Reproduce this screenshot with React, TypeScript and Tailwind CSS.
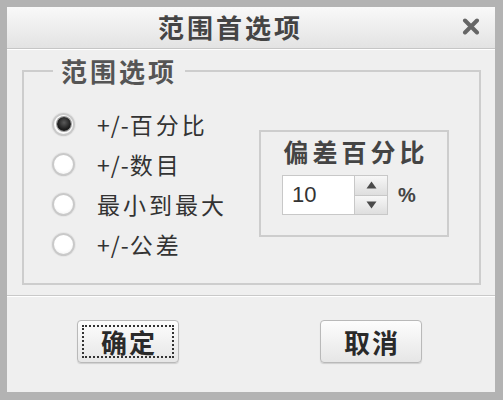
import React from "react";

function Radio({ checked }: { checked?: boolean }) {
  return (
    <div className="w-[23px] h-[23px] rounded-full border-2 border-[#c9c9c9] bg-[radial-gradient(circle_at_50%_40%,#ffffff_55%,#ececec_100%)] shadow-[0_0_0_1px_#e6e6e6] flex items-center justify-center">
      {checked && (
        <div className="w-[14px] h-[14px] rounded-full bg-[radial-gradient(circle_at_50%_40%,#5a5a5a_0%,#1e1e1e_60%,#111_100%)] shadow-[0_0_0_1px_#9a9a9a]" />
      )}
    </div>
  );
}

function Button({ label, focused }: { label: string; focused?: boolean }) {
  return (
    <div className="w-[102px] h-[43px] rounded-[4px] border border-[#b9b9b9] bg-linear-to-b from-[#fdfdfd] to-[#e6e6e6] shadow-[0_1px_1px_#cfcfcf] p-[4px]">
      <div
        className={
          focused
            ? "w-full h-full border-2 border-dotted border-[#333] flex items-center justify-center"
            : "w-full h-full border-2 border-transparent flex items-center justify-center"
        }
      >
        <span className="text-[26px] leading-none font-bold tracking-[2px] pl-[2px] text-[#2a2a2a]">{label}</span>
      </div>
    </div>
  );
}

export default function App() {
  const radios = [
    { prefix: "+/-", label: "百分比", checked: true },
    { prefix: "+/-", label: "数目" },
    { prefix: "", label: "最小到最大" },
    { prefix: "+/-", label: "公差" },
  ];
  return (
    <div className="w-[503px] h-[400px] bg-[#b3b3b3] pl-[7px] pt-[7px] pr-[8px] pb-[8px] font-['Noto_Sans_CJK_SC',sans-serif]">
      <div className="h-full flex flex-col bg-[#efefef]">
        <div className="h-[41px] flex items-center bg-linear-to-b from-[#f9f9f9] to-[#e3e3e3]">
          <div className="flex-1 text-center text-[26px] leading-none font-bold tracking-[3px] text-[#444] pl-[3px] pb-[2px]">
            范围首选项
          </div>
          <div className="w-[44px] pl-[11px] pb-[2px] flex items-center">
            <svg width="18" height="17" viewBox="0 0 18 17">
              <path d="M3 2.5 L15 14.5 M15 2.5 L3 14.5" stroke="#666" strokeWidth="4" strokeLinecap="round" />
            </svg>
          </div>
        </div>
        <div className="h-px bg-[#c6c6c6]" />
        <div className="h-px bg-white" />

        <fieldset className="mt-[6px] ml-[15px] mr-[14px] border-2 border-[#cdcdcd]">
          <legend className="ml-[29px] px-[8px] text-[26px] leading-[30px] font-bold tracking-[3px] text-[#555]">
            范围选项
          </legend>
          <div className="flex pl-[28px] pt-[18px] pb-[19px]">
            <div className="flex flex-col">
              {radios.map((r) => (
                <div key={r.label} className="h-[40px] flex items-center gap-[22px]">
                  <Radio checked={r.checked} />
                  <span className="text-[23px] leading-none text-[#333]">
                    {r.prefix && <span className="tracking-[1px]">{r.prefix}</span>}
                    <span className="tracking-[3px]">{r.label}</span>
                  </span>
                </div>
              ))}
            </div>
            <div className="ml-auto mr-[30px] mt-[26px] w-[190px] h-[107px] border-2 border-[#cdcdcd] flex flex-col">
              <div className="pt-[5px] text-center text-[25px] leading-[28px] font-bold tracking-[4px] pl-[4px] text-[#444]">
                偏差百分比
              </div>
              <div className="mt-[10px] pl-[21px] flex items-center">
                <div className="w-[73px] h-[40px] bg-white border border-[#c8c8c8] flex items-center pl-[9px] text-[22px] leading-none text-[#333] font-['Liberation_Sans',sans-serif]">
                  10
                </div>
                <div className="w-[33px] h-[40px] border border-l-0 border-[#c8c8c8] flex flex-col">
                  <div className="flex-1 bg-linear-to-b from-[#f7f7f7] to-[#dedede] flex items-center justify-center border-b border-[#c8c8c8]">
                    <svg width="11" height="8" viewBox="0 0 11 8">
                      <path d="M5.5 0.5 L10.5 7.5 L0.5 7.5 Z" fill="#4a4a4a" />
                    </svg>
                  </div>
                  <div className="flex-1 bg-linear-to-b from-[#f7f7f7] to-[#dedede] flex items-center justify-center">
                    <svg width="11" height="8" viewBox="0 0 11 8">
                      <path d="M0.5 0.5 L10.5 0.5 L5.5 7.5 Z" fill="#4a4a4a" />
                    </svg>
                  </div>
                </div>
                <span className="ml-[10px] text-[20px] leading-none font-bold text-[#444] font-['Liberation_Sans',sans-serif]">%</span>
              </div>
            </div>
          </div>
        </fieldset>

        <div className="mt-[10px] h-px bg-[#c9c9c9]" />
        <div className="h-px bg-white" />

        <div className="flex pl-[70px] pt-[23px] gap-[141px]">
          <Button label="确定" focused />
          <Button label="取消" />
        </div>
      </div>
    </div>
  );
}
